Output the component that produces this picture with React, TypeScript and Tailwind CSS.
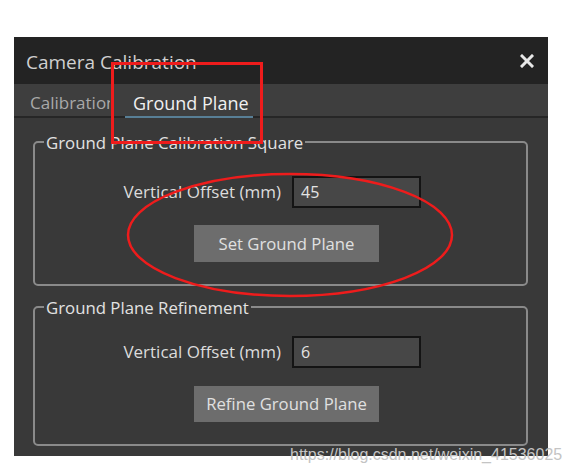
import React from "react";

const font = { fontFamily: '"Open Sans", "Noto Sans", sans-serif' };

function Group({ title, value, button, top, h, pt, gap, btnH }: { title: string; value: string; button: string; top: string; h: string; pt: string; gap: string; btnH: string }) {
  return (
    <div className={`relative ml-[19px] w-[495px] ${top} ${h} ${pt} rounded-[5px] border-2 border-[#8a8a8a] flex flex-col`}>
      <span className="absolute left-[9px] top-[-12px] bg-[#393939] px-[2px] text-[16.8px] leading-[24px] text-[#e2e2e2]">{title}</span>
      <div className="flex items-center">
        <div className="w-[246px] text-right text-[17px] text-[#dcdcdc]">Vertical Offset (mm)</div>
        <div className="ml-[11px] flex h-[32px] w-[129px] items-center border-2 border-[#141414] bg-[#474747] pl-[7px] text-[16px] text-[#e4e4e4]">{value}</div>
      </div>
      <div className={`${gap} ml-[159px] flex ${btnH} w-[185px] items-center justify-center bg-[#6d6d6d] text-[16.7px] text-[#e0e0e0]`}>{button}</div>
    </div>
  );
}

export default function App() {
  return (
    <div className="relative h-[474px] w-[572px] overflow-hidden bg-white" style={font}>
      <div className="ml-[14px] mt-[37px] h-[419px] w-[534px] bg-[#393939]">
        <div className="flex h-[47px] items-center justify-between bg-[#232323] pl-[12px] pr-[14px] pt-[3px]">
          <span className="text-[19px] text-[#d0d0d0]">Camera Calibration</span>
          <svg width="14" height="14" viewBox="0 0 14 14" className="mt-[-3px]">
            <path d="M2 2 L12 12 M12 2 L2 12" stroke="#e8e8e8" strokeWidth="3" strokeLinecap="square" />
          </svg>
        </div>
        <div className="flex h-[34px] items-stretch border-b-2 border-[#262626] bg-[#3e3e3e]">
          <div className="w-[96px] overflow-hidden whitespace-nowrap pl-[16px] pt-[6px] text-[17px] text-[#a9a9a9]">Calibration</div>
          <div className="relative ml-[15px] pl-[8px] pr-[4px] pt-[6px] text-[18px] text-[#f0f0f0]">
            Ground Plane
            <div className="absolute bottom-[-2px] left-0 right-0 h-[2px] bg-[#587f96]" />
          </div>
        </div>
        <Group title="Ground Plane Calibration Square" value="45" button="Set Ground Plane" top="mt-[23px]" h="h-[145px]" pt="pt-[33px]" gap="mt-[17px]" btnH="h-[37px]" />
        <Group title="Ground Plane Refinement" value="6" button="Refine Ground Plane" top="mt-[20px]" h="h-[140px]" pt="pt-[28px]" gap="mt-[18px]" btnH="h-[36px]" />
      </div>
      <div className="absolute left-[111px] top-[62px] h-[82px] w-[152px] border-[3px] border-[#ee1c1c]" />
      <svg className="absolute left-0 top-0" width="572" height="474">
        <ellipse cx="290" cy="235" rx="162" ry="61" fill="none" stroke="#ee1c1c" strokeWidth="2.5" />
      </svg>
      <div className="absolute left-[290px] top-[444px] whitespace-nowrap text-[16px] leading-[22px] tracking-[0px] text-[#c4c4c4]" style={{ fontFamily: '"Liberation Sans", Arial, sans-serif' }}>
        https://blog.csdn.net/weixin_41536025
      </div>
    </div>
  );
}
